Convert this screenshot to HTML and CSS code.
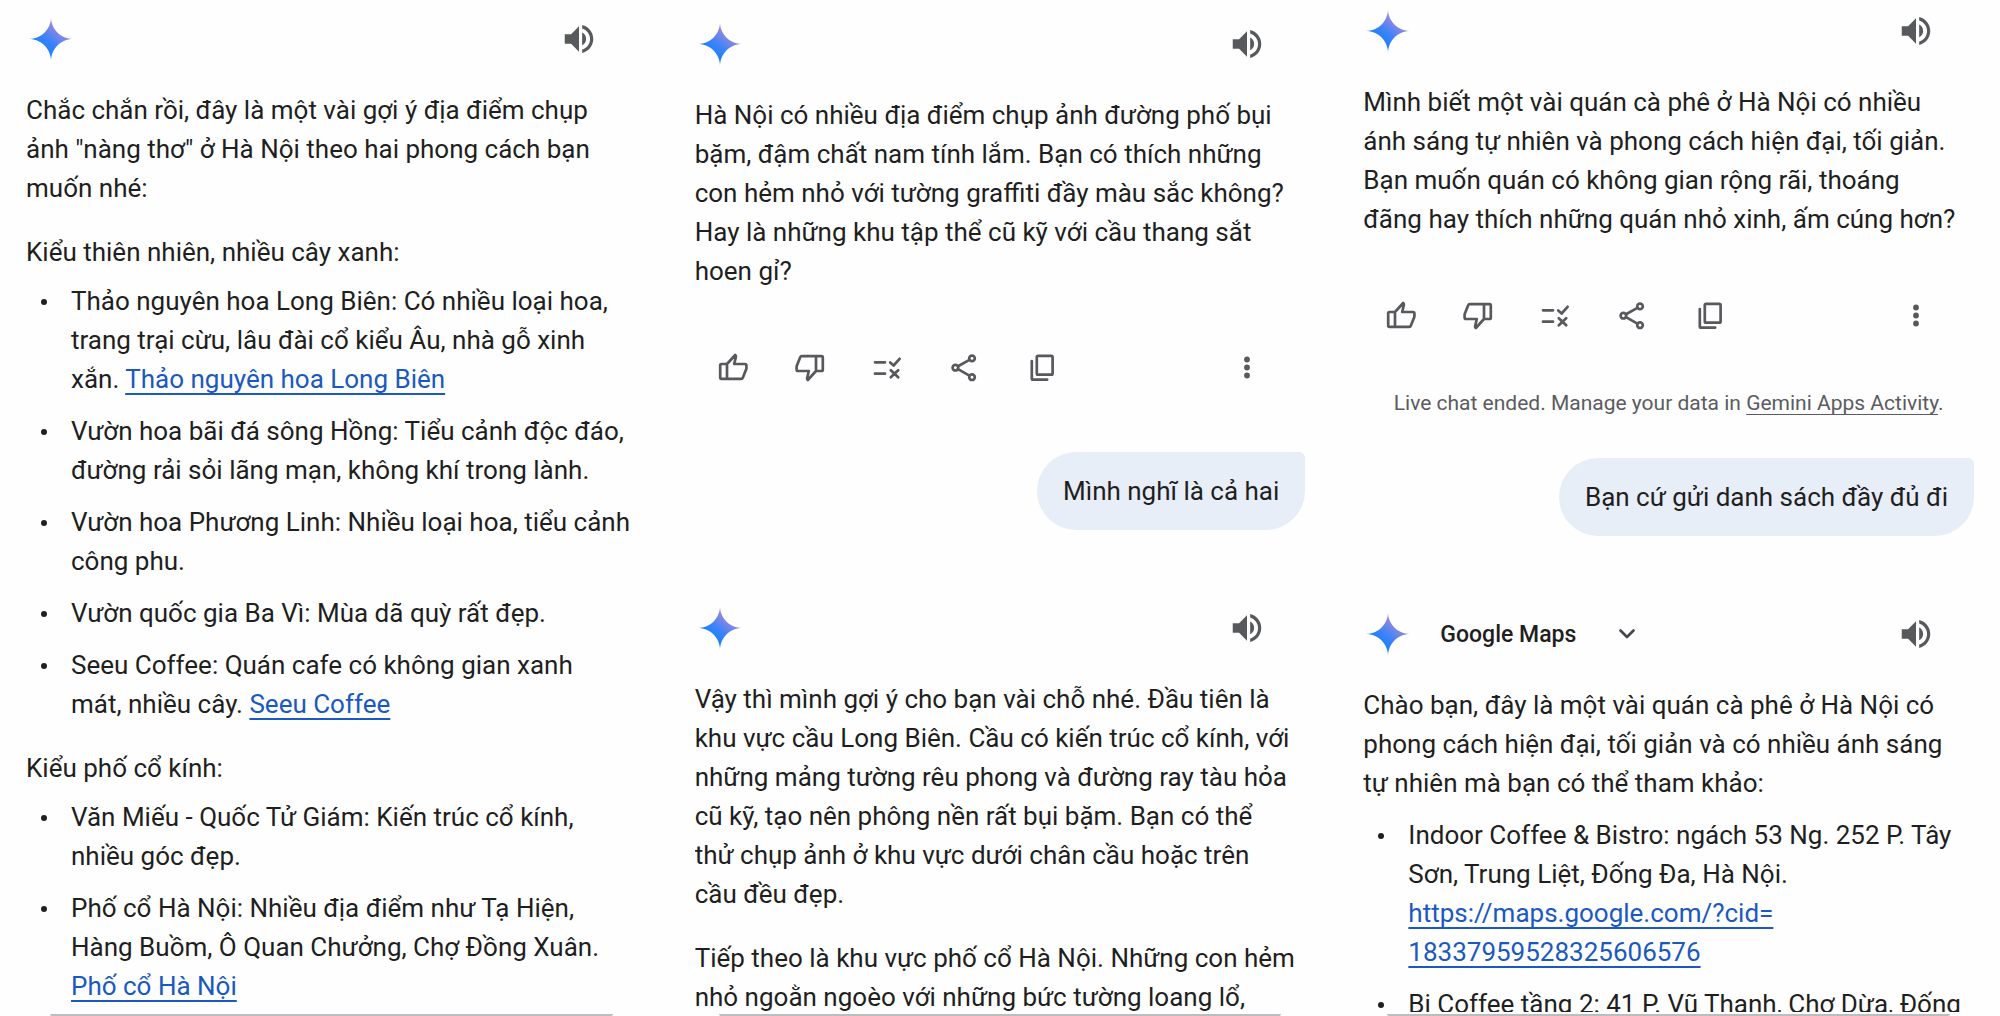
FILE: index.html
```
<!DOCTYPE html>
<html lang="vi">
<head>
<meta charset="utf-8">
<meta name="viewport" content="width=device-width, initial-scale=1">
<title>Gemini</title>
<link rel="stylesheet" href="styles.css">
</head>
<body>
<svg class="sprite" aria-hidden="true">
  <defs>
    <linearGradient id="spark-fill" x1="0.3" y1="0.75" x2="0.75" y2="0.2">
      <stop offset="0" stop-color="#1480fb"/>
      <stop offset="0.4" stop-color="#3f83f8"/>
      <stop offset="1" stop-color="#b18ad8"/>
    </linearGradient>
    <symbol id="spark" viewBox="0 0 28 28">
      <path fill="url(#spark-fill)" d="M14 28C14 26.06 13.63 24.24 12.88 22.54C12.16 20.84 11.17 19.36 9.9 18.1C8.64 16.84 7.16 15.84 5.46 15.12C3.76 14.37 1.94 14 0 14C1.94 14 3.76 13.64 5.46 12.91C7.16 12.17 8.64 11.17 9.9 9.91C11.17 8.65 12.16 7.16 12.88 5.46C13.63 3.76 14 1.94 14 0C14 1.94 14.36 3.76 15.09 5.46C15.84 7.16 16.84 8.65 18.1 9.91C19.36 11.17 20.84 12.17 22.54 12.91C24.24 13.64 26.06 14 28 14C26.06 14 24.24 14.37 22.54 15.12C20.84 15.84 19.36 16.84 18.1 18.1C16.84 19.36 15.84 20.84 15.09 22.54C14.36 24.24 14 26.06 14 28Z"/>
    </symbol>
    <symbol id="speaker" viewBox="0 0 24 24">
      <path fill="currentColor" d="M3 9v6h4l5 5V4L7 9H3zm13.5 3c0-1.77-1.02-3.29-2.5-4.03v8.05c1.48-.73 2.5-2.25 2.5-4.02zM14 3.23v2.06c2.89.86 5 3.54 5 6.71s-2.11 5.85-5 6.71v2.06c4.01-.91 7-4.49 7-8.77s-2.99-7.86-7-8.77z"/>
    </symbol>
    <symbol id="thumb-up" viewBox="0 0 34 34">
      <path class="stroke" d="M11 14H5.5Q4.200 14 4.200 15.300V27.500Q4.200 28.800 5.500 28.800H25.200Q26.400 28.800 26.800 27.700L30.200 19.200Q30.400 18.700 30.400 18V15.500Q30.400 14 28.900 14H18.200L19.900 6.600Q20 5.800 19.400 5.200L19.200 5L11 14V28.800"/>
    </symbol>
    <symbol id="thumb-down" viewBox="0 0 34 34">
      <path class="stroke" transform="rotate(180 17 17.500)" d="M11 14H5.500Q4.200 14 4.200 15.300V27.500Q4.200 28.800 5.500 28.800H25.200Q26.400 28.800 26.800 27.700L30.200 19.200Q30.400 18.700 30.400 18V15.500Q30.400 14 28.900 14H18.200L19.900 6.600Q20 5.800 19.400 5.200L19.200 5L11 14V28.800"/>
    </symbol>
    <symbol id="rule" viewBox="0 0 34 34">
      <path class="stroke" d="M5 12.300H15M5 23.700H15M20.200 12.500L23.600 15.500L29.600 8.800M20.800 20.200L28.200 27.200M28.200 20.200L20.800 27.200"/>
    </symbol>
    <symbol id="share" viewBox="0 0 34 34">
      <path class="stroke" d="M11 16.200L22.400 9.900M11 19.200L22.400 25.700"/>
      <circle class="stroke" cx="8.400" cy="17.700" r="2.800"/>
      <circle class="stroke" cx="25" cy="8.400" r="2.800"/>
      <circle class="stroke" cx="25" cy="27.200" r="2.800"/>
    </symbol>
    <symbol id="copy" viewBox="0 0 34 34">
      <rect class="stroke" x="12.800" y="5.800" width="15.800" height="18.800" rx="1.200"/>
      <path class="stroke" d="M7.800 11V28.400Q7.800 29.600 9 29.600H23.200"/>
    </symbol>
    <symbol id="more" viewBox="0 0 34 34">
      <g fill="currentColor"><circle cx="17" cy="9.500" r="2.900"/><circle cx="17" cy="17.500" r="2.900"/><circle cx="17" cy="25.500" r="2.900"/></g>
    </symbol>
    <symbol id="chevron" viewBox="0 0 18 12">
      <path class="stroke" d="M2.500 2.500L9 9L15.500 2.500"/>
    </symbol>
  </defs>
</svg>

<main class="board">
  <section class="screen screen-ideas">
    <div class="thread">
      <header class="reply-head">
        <svg class="spark"><use href="#spark"/></svg>
        <button class="icon-button speak" type="button" aria-label="Listen"><svg><use href="#speaker"/></svg></button>
      </header>
      <div class="reply">
        <p>Chắc chắn rồi, đây là một vài gợi ý địa điểm chụp<br>ảnh "nàng thơ" ở Hà Nội theo hai phong cách bạn<br>muốn nhé:</p>
        <h2>Kiểu thiên nhiên, nhiều cây xanh:</h2>
        <ul>
          <li>Thảo nguyên hoa Long Biên: Có nhiều loại hoa,<br>trang trại cừu, lâu đài cổ kiểu Âu, nhà gỗ xinh<br>xắn. <a href="#">Thảo nguyên hoa Long Biên</a></li>
          <li>Vườn hoa bãi đá sông Hồng: Tiểu cảnh độc đáo,<br>đường rải sỏi lãng mạn, không khí trong lành.</li>
          <li>Vườn hoa Phương Linh: Nhiều loại hoa, tiểu cảnh<br>công phu.</li>
          <li>Vườn quốc gia Ba Vì: Mùa dã quỳ rất đẹp.</li>
          <li>Seeu Coffee: Quán cafe có không gian xanh<br>mát, nhiều cây. <a href="#">Seeu Coffee</a></li>
        </ul>
        <h2>Kiểu phố cổ kính:</h2>
        <ul>
          <li>Văn Miếu - Quốc Tử Giám: Kiến trúc cổ kính,<br>nhiều góc đẹp.</li>
          <li>Phố cổ Hà Nội: Nhiều địa điểm như Tạ Hiện,<br>Hàng Buồm, Ô Quan Chưởng, Chợ Đồng Xuân.<br><a href="#">Phố cổ Hà Nội</a></li>
        </ul>
      </div>
    </div>
    <footer class="composer"></footer>
  </section>

  <section class="screen screen-street">
    <div class="thread">
      <header class="reply-head">
        <svg class="spark"><use href="#spark"/></svg>
        <button class="icon-button speak" type="button" aria-label="Listen"><svg><use href="#speaker"/></svg></button>
      </header>
      <div class="reply">
        <p>Hà Nội có nhiều địa điểm chụp ảnh đường phố bụi<br>bặm, đậm chất nam tính lắm. Bạn có thích những<br>con hẻm nhỏ với tường graffiti đầy màu sắc không?<br>Hay là những khu tập thể cũ kỹ với cầu thang sắt<br>hoen gỉ?</p>
      </div>
      <div class="actions">
        <button class="icon-button" type="button" aria-label="Good response"><svg><use href="#thumb-up"/></svg></button>
        <button class="icon-button" type="button" aria-label="Bad response"><svg><use href="#thumb-down"/></svg></button>
        <button class="icon-button" type="button" aria-label="Modify response"><svg><use href="#rule"/></svg></button>
        <button class="icon-button" type="button" aria-label="Share"><svg><use href="#share"/></svg></button>
        <button class="icon-button" type="button" aria-label="Copy"><svg><use href="#copy"/></svg></button>
        <button class="icon-button more" type="button" aria-label="More"><svg><use href="#more"/></svg></button>
      </div>
      <p class="bubble">Mình nghĩ là cả hai</p>
      <header class="reply-head">
        <svg class="spark"><use href="#spark"/></svg>
        <button class="icon-button speak" type="button" aria-label="Listen"><svg><use href="#speaker"/></svg></button>
      </header>
      <div class="reply">
        <p>Vậy thì mình gợi ý cho bạn vài chỗ nhé. Đầu tiên là<br>khu vực cầu Long Biên. Cầu có kiến trúc cổ kính, với<br>những mảng tường rêu phong và đường ray tàu hỏa<br>cũ kỹ, tạo nên phông nền rất bụi bặm. Bạn có thể<br>thử chụp ảnh ở khu vực dưới chân cầu hoặc trên<br>cầu đều đẹp.</p>
        <p>Tiếp theo là khu vực phố cổ Hà Nội. Những con hẻm<br>nhỏ ngoằn ngoèo với những bức tường loang lổ,</p>
      </div>
    </div>
    <footer class="composer"></footer>
  </section>

  <section class="screen screen-cafe">
    <div class="thread">
      <header class="reply-head">
        <svg class="spark"><use href="#spark"/></svg>
        <button class="icon-button speak" type="button" aria-label="Listen"><svg><use href="#speaker"/></svg></button>
      </header>
      <div class="reply">
        <p>Mình biết một vài quán cà phê ở Hà Nội có nhiều<br>ánh sáng tự nhiên và phong cách hiện đại, tối giản.<br>Bạn muốn quán có không gian rộng rãi, thoáng<br>đãng hay thích những quán nhỏ xinh, ấm cúng hơn?</p>
      </div>
      <div class="actions">
        <button class="icon-button" type="button" aria-label="Good response"><svg><use href="#thumb-up"/></svg></button>
        <button class="icon-button" type="button" aria-label="Bad response"><svg><use href="#thumb-down"/></svg></button>
        <button class="icon-button" type="button" aria-label="Modify response"><svg><use href="#rule"/></svg></button>
        <button class="icon-button" type="button" aria-label="Share"><svg><use href="#share"/></svg></button>
        <button class="icon-button" type="button" aria-label="Copy"><svg><use href="#copy"/></svg></button>
        <button class="icon-button more" type="button" aria-label="More"><svg><use href="#more"/></svg></button>
      </div>
      <p class="notice">Live chat ended. Manage your data in <a href="#">Gemini Apps Activity</a>.</p>
      <p class="bubble">Bạn cứ gửi danh sách đầy đủ đi</p>
      <header class="reply-head">
        <svg class="spark"><use href="#spark"/></svg>
        <button class="source" type="button">Google Maps <svg><use href="#chevron"/></svg></button>
        <button class="icon-button speak" type="button" aria-label="Listen"><svg><use href="#speaker"/></svg></button>
      </header>
      <div class="reply">
        <p>Chào bạn, đây là một vài quán cà phê ở Hà Nội có<br>phong cách hiện đại, tối giản và có nhiều ánh sáng<br>tự nhiên mà bạn có thể tham khảo:</p>
        <ul>
          <li>Indoor Coffee &amp; Bistro: ngách 53 Ng. 252 P. Tây<br>Sơn, Trung Liệt, Đống Đa, Hà Nội.<br><a href="#">https://maps.google.com/?cid=<br>18337959528325606576</a></li>
          <li>Bị Coffee tầng 2: 41 P. Vũ Thạnh, Chợ Dừa, Đống</li>
        </ul>
      </div>
    </div>
    <footer class="composer"></footer>
  </section>
</main>
</body>
</html>
```
FILE: styles.css
```
* {
  box-sizing: border-box;
}

body {
  margin: 0;
  background: #fefefe;
  color: #1f1f1f;
  font-family: Roboto, "Liberation Sans", sans-serif;
  font-size: 26px;
  line-height: 39px;
}

p, h2, ul {
  margin: 0;
  padding: 0;
  font-size: inherit;
  font-weight: 400;
}

button {
  padding: 0;
  border: 0;
  background: none;
  color: inherit;
  font: inherit;
  cursor: pointer;
}

svg {
  display: block;
}

.sprite {
  position: absolute;
  width: 0;
  height: 0;
}

.stroke {
  fill: none;
  stroke: currentColor;
  stroke-width: 2.7px;
  stroke-linecap: round;
  stroke-linejoin: round;
}

.board {
  display: grid;
  grid-template-columns: repeat(3, minmax(0, 1fr));
  column-gap: 58px;
  height: 100vh;
  padding: 0 26px;
}

.screen {
  display: flex;
  flex-direction: column;
  min-height: 0;
}

.screen-ideas {
  padding-top: 17px;
}

.screen-street {
  padding-top: 22px;
}

.screen-cafe {
  padding-top: 9px;
}

.thread {
  display: flex;
  flex: 1;
  flex-direction: column;
  min-height: 0;
  overflow: hidden;
  white-space: nowrap;
}

.thread > * {
  flex-shrink: 0;
}

.reply-head {
  display: flex;
  align-items: center;
  height: 44px;
  margin-bottom: 30px;
  padding: 0 39px 0 3px;
}

.spark {
  width: 44px;
  height: 44px;
}

.icon-button {
  color: #58595c;
}

.icon-button svg {
  width: 34px;
  height: 34px;
}

.speak {
  margin-left: auto;
}

.speak svg {
  width: 38px;
  height: 38px;
}

.source {
  display: flex;
  align-items: center;
  gap: 42px;
  margin-left: 30px;
  font-size: 23px;
  font-weight: 500;
}

.source svg {
  width: 18px;
  height: 12px;
  color: #444749;
}

.reply p + p,
.reply h2 {
  margin-top: 25px;
}

.reply ul {
  display: grid;
  gap: 13px;
  margin-top: 13px;
  list-style: none;
}

.reply h2 + ul {
  margin-top: 10px;
}

.reply li {
  position: relative;
  padding-left: 45px;
}

.reply li::before {
  content: "";
  position: absolute;
  top: 17px;
  left: 15px;
  width: 6px;
  height: 6px;
  border-radius: 50%;
  background: currentColor;
}

a {
  color: #1a59c0;
  text-decoration: underline;
  text-decoration-skip-ink: none;
  text-decoration-thickness: 2px;
  text-underline-offset: 5px;
}

.actions {
  display: flex;
  gap: 43px;
  margin-top: 59px;
  padding: 0 41px 0 21px;
}

.more {
  margin-left: auto;
}

.notice {
  margin-top: 59px;
  color: #5a5c5f;
  font-size: 21px;
  line-height: 24px;
  text-align: center;
}

.notice a {
  color: inherit;
  text-decoration-thickness: 1px;
  text-underline-offset: 4px;
}

.bubble {
  align-self: flex-end;
  margin: 68px 0 76px;
  padding: 20px 26px 19px;
  border-radius: 39px 6px 39px 39px;
  background: #e8eef7;
}

.notice + .bubble {
  margin-top: 43px;
}

.composer {
  flex-shrink: 0;
  height: 4px;
  margin: 0 24px;
  border-bottom: 2px solid #bdbdbf;
  border-radius: 2px;
}
```
